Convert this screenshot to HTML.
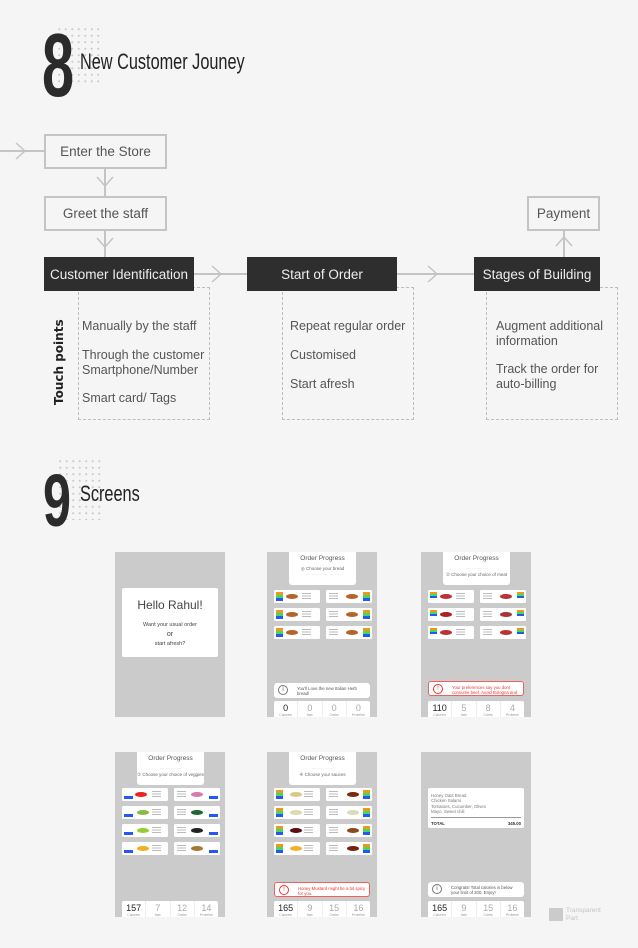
<!DOCTYPE html>
<html><head><meta charset="utf-8"><style>
*{margin:0;padding:0;box-sizing:border-box}
body{width:638px;height:948px;background:#f5f5f5;position:relative;overflow:hidden;font-family:"Liberation Sans",sans-serif;color:#555}
.a{position:absolute}
.dots{position:absolute;background-image:radial-gradient(circle,#c8c8c8 0.8px,transparent 1.2px);background-size:6.5px 6.5px}
.num{position:absolute;font-family:"Liberation Sans Narrow","Liberation Sans",sans-serif;color:#2b2b2b;font-weight:bold;transform-origin:left top}
.ttl{position:absolute;font-family:"Liberation Sans Narrow","Liberation Sans",sans-serif;color:#222;transform-origin:left top}
.box{position:absolute;border:2px solid #c4c4c4;background:#f5f5f5;font-size:13.5px;color:#555;display:flex;align-items:center;justify-content:center;font-family:"Liberation Sans",sans-serif;z-index:2}
.dk{position:absolute;background:#2e2e2e;color:#eee;font-size:13.5px;display:flex;align-items:center;justify-content:center;font-family:"Liberation Sans",sans-serif;z-index:2}
.dash{position:absolute;border:1.5px dashed #bdbdbd}
.tp{position:absolute;font-family:"Liberation Sans",sans-serif;font-size:12.5px;color:#555;line-height:15px}
.ln{position:absolute;background:#c4c4c4}
.ph{position:absolute;width:110px;height:165px;background:#cbcbcb;overflow:hidden}
.ph .w{position:absolute;background:#fff;border-radius:2px}
.op{left:22px;top:0;width:67px;height:33px;border-radius:0 0 3px 3px!important;text-align:center;font-size:4.5px;color:#666;padding-top:3px;line-height:6px;white-space:nowrap}
.op b{display:block;font-weight:normal;font-size:6.5px;color:#555;margin-bottom:3px;line-height:8px}
.c{position:absolute;width:46px;height:13px;background:#fff;border-radius:1.5px}
.bars{position:absolute;top:2px;width:7px;height:9px;background:linear-gradient(#f7941d 0 33%,#3ddc5f 33% 66%,#2457f5 66%)}
.fd{position:absolute;top:4px;width:12px;height:5px;border-radius:50%;background:#b5652b}
.tx{position:absolute;top:3px;width:9px;height:7px;background:repeating-linear-gradient(#bbb 0 1px,transparent 1px 2.5px)}
.st{position:absolute;left:7px;top:149px;width:96px;height:16px;background:#fff;display:flex;border-radius:2px 2px 0 0}
.st div{flex:1;text-align:center;font-size:9px;color:#aaa;line-height:10px;padding-top:2px;border-left:1px solid #eee}
.st div:first-child{color:#222;border:0}
.st div span{display:block;font-size:3.5px;color:#999;line-height:4px}
.tip{position:absolute;left:7px;top:130px;width:96px;height:15px;background:#fff;border-radius:3px;font-size:4.3px;color:#555;padding:3px 2px 0 23px;line-height:5.3px;overflow:hidden}
.tip i{position:absolute;left:4px;top:2px;width:10px;height:10px;border:1px solid #777;border-radius:50%;font-style:normal;font-size:6px;text-align:center;line-height:9px}
.tip.r{border:1px solid #f06060;color:#e33}
.tip.r i{border-color:#e33;color:#e33}
</style></head><body>

<div class="dots" style="left:56px;top:26px;width:46px;height:60px"></div>
<div class="num" style="left:42px;top:21px;font-size:90px;transform:scaleX(0.64);line-height:90px">8</div>
<div class="ttl" style="left:80px;top:49px;font-size:22px;transform:scaleX(0.74)">New Customer Jouney</div>

<div class="ln" style="left:0;top:150px;width:44px;height:2px"></div>
<svg class="a" style="left:14px;top:142px" width="14" height="18"><polyline points="2,1 11,9 2,17" fill="none" stroke="#c4c4c4" stroke-width="1.5"/></svg>
<div class="box" style="left:44px;top:134px;width:123px;height:35px">Enter the Store</div>
<div class="ln" style="left:104px;top:169px;width:2px;height:27px"></div>
<svg class="a" style="left:96px;top:175px" width="18" height="14"><polyline points="1,2 9,11 17,2" fill="none" stroke="#c4c4c4" stroke-width="1.5"/></svg>
<div class="box" style="left:44px;top:196px;width:123px;height:35px">Greet the staff</div>
<div class="ln" style="left:104px;top:231px;width:2px;height:26px"></div>
<svg class="a" style="left:96px;top:236px" width="18" height="14"><polyline points="1,2 9,11 17,2" fill="none" stroke="#c4c4c4" stroke-width="1.5"/></svg>

<div class="dk" style="left:44px;top:257px;width:150px;height:34px">Customer Identification</div>
<div class="ln" style="left:194px;top:273px;width:53px;height:2px"></div>
<svg class="a" style="left:210px;top:265px" width="14" height="18"><polyline points="2,1 11,9 2,17" fill="none" stroke="#c4c4c4" stroke-width="1.5"/></svg>
<div class="dk" style="left:247px;top:257px;width:150px;height:34px">Start of Order</div>
<div class="ln" style="left:397px;top:273px;width:77px;height:2px"></div>
<svg class="a" style="left:426px;top:265px" width="14" height="18"><polyline points="2,1 11,9 2,17" fill="none" stroke="#c4c4c4" stroke-width="1.5"/></svg>
<div class="dk" style="left:474px;top:257px;width:126px;height:34px">Stages of Building</div>
<div class="ln" style="left:563px;top:231px;width:2px;height:26px"></div>
<svg class="a" style="left:555px;top:234px" width="18" height="14"><polyline points="1,12 9,3 17,12" fill="none" stroke="#c4c4c4" stroke-width="1.5"/></svg>
<div class="box" style="left:527px;top:196px;width:73px;height:35px">Payment</div>

<div class="dash" style="left:78px;top:287px;width:132px;height:133px"></div>
<div class="dash" style="left:282px;top:287px;width:132px;height:133px"></div>
<div class="dash" style="left:486px;top:287px;width:132px;height:133px"></div>

<div class="a" style="left:52px;top:405px;transform:rotate(-90deg);transform-origin:left top;font-family:'DejaVu Sans',sans-serif;font-weight:bold;font-size:12px;color:#222;white-space:nowrap">Touch points</div>
<div class="tp" style="left:82px;top:319px">Manually by the staff</div>
<div class="tp" style="left:82px;top:348px">Through the customer<br>Smartphone/Number</div>
<div class="tp" style="left:82px;top:391px">Smart card/ Tags</div>
<div class="tp" style="left:290px;top:319px">Repeat regular order</div>
<div class="tp" style="left:290px;top:348px">Customised</div>
<div class="tp" style="left:290px;top:377px">Start afresh</div>
<div class="tp" style="left:496px;top:319px">Augment additional<br>information</div>
<div class="tp" style="left:496px;top:362px">Track the order for<br>auto-billing</div>

<div class="dots" style="left:57px;top:458px;width:46px;height:62px"></div>
<div class="num" style="left:43px;top:464px;font-size:74px;transform:scaleX(0.68);line-height:74px">9</div>
<div class="ttl" style="left:80px;top:481px;font-size:22px;transform:scaleX(0.74)">Screens</div>

<div class="ph" style="left:115px;top:552px">
 <div class="w" style="left:7px;top:36px;width:96px;height:69px;text-align:center">
  <div style="font-size:12px;color:#444;margin-top:10px">Hello Rahul!</div>
  <div style="font-size:5.5px;color:#444;margin-top:9px;line-height:9px">Want your usual order<br><span style="font-size:7px">or</span><br>start afresh?</div>
 </div>
</div>

<div class="ph" style="left:267px;top:552px">
 <div class="w op"><b>Order Progress</b>◎ Choose your bread<br><span style="color:#ddd">— — — — — —</span></div>
 <div class="c" style="left:7px;top:38px"><div class="bars" style="left:2px"></div><div class="fd" style="left:12px"></div><div class="tx" style="left:28px"></div></div>
 <div class="c" style="left:59px;top:38px"><div class="tx" style="left:3px"></div><div class="fd" style="left:20px"></div><div class="bars" style="right:2px"></div></div>
 <div class="c" style="left:7px;top:56px"><div class="bars" style="left:2px"></div><div class="fd" style="left:12px"></div><div class="tx" style="left:28px"></div></div>
 <div class="c" style="left:59px;top:56px"><div class="tx" style="left:3px"></div><div class="fd" style="left:20px"></div><div class="bars" style="right:2px"></div></div>
 <div class="c" style="left:7px;top:74px"><div class="bars" style="left:2px"></div><div class="fd" style="left:12px"></div><div class="tx" style="left:28px"></div></div>
 <div class="c" style="left:59px;top:74px"><div class="tx" style="left:3px"></div><div class="fd" style="left:20px"></div><div class="bars" style="right:2px"></div></div>
 <div class="tip" style="top:131px"><i>i</i>You'll Love the new Italian Herb bread!</div>
 <div class="st"><div>0<span>Calories</span></div><div>0<span>fats</span></div><div>0<span>Carbs</span></div><div>0<span>Proteins</span></div></div>
</div>

<div class="ph" style="left:421px;top:552px">
 <div class="w op"><b>Order Progress</b><span style="color:#ddd">— — — —</span><br>② Choose your choice of meat</div>
 <div class="c" style="left:7px;top:38px"><div class="bars" style="left:2px;height:6px"></div><div class="fd" style="left:12px;background:#b33"></div><div class="tx" style="left:28px"></div></div>
 <div class="c" style="left:59px;top:38px"><div class="tx" style="left:3px"></div><div class="fd" style="left:20px;background:#b33"></div><div class="bars" style="right:2px;height:6px"></div></div>
 <div class="c" style="left:7px;top:56px"><div class="bars" style="left:2px;height:6px"></div><div class="fd" style="left:12px;background:#a22"></div><div class="tx" style="left:28px"></div></div>
 <div class="c" style="left:59px;top:56px"><div class="tx" style="left:3px"></div><div class="fd" style="left:20px;background:#a33"></div><div class="bars" style="right:2px;height:6px"></div></div>
 <div class="c" style="left:7px;top:74px"><div class="bars" style="left:2px;height:6px"></div><div class="fd" style="left:12px;background:#b33"></div><div class="tx" style="left:28px"></div></div>
 <div class="c" style="left:59px;top:74px"><div class="tx" style="left:3px"></div><div class="fd" style="left:20px;background:#b33"></div><div class="bars" style="right:2px;height:6px"></div></div>
 <div class="tip r" style="top:129px"><i>!</i>Your preferences say you dont consume beef. Avoid Bologna and Pastrami</div>
 <div class="st"><div>110<span>Calories</span></div><div>5<span>fats</span></div><div>8<span>Carbs</span></div><div>4<span>Proteins</span></div></div>
</div>

<div class="ph" style="left:115px;top:752px">
 <div class="w op"><b>Order Progress</b><span style="color:#ddd">— — — —</span><br>② Choose your choice of veggies</div>
 <div class="c" style="left:7px;top:36px"><div class="bars" style="left:2px;top:8px;width:9px;height:3px;background:#2457f5"></div><div class="fd" style="left:13px;background:#e22"></div><div class="tx" style="left:30px"></div></div>
 <div class="c" style="left:59px;top:36px"><div class="tx" style="left:3px"></div><div class="fd" style="left:17px;background:#d7a"></div><div class="bars" style="right:2px;top:8px;width:9px;height:3px;background:#2457f5"></div></div>
 <div class="c" style="left:7px;top:54px"><div class="bars" style="left:2px;top:8px;width:9px;height:3px;background:#2457f5"></div><div class="fd" style="left:15px;background:#8b4"></div><div class="tx" style="left:30px"></div></div>
 <div class="c" style="left:59px;top:54px"><div class="tx" style="left:3px"></div><div class="fd" style="left:17px;background:#263"></div><div class="bars" style="right:2px;top:8px;width:9px;height:3px;background:#2457f5"></div></div>
 <div class="c" style="left:7px;top:72px"><div class="bars" style="left:2px;top:8px;width:9px;height:3px;background:#2457f5"></div><div class="fd" style="left:15px;background:#9c3"></div><div class="tx" style="left:30px"></div></div>
 <div class="c" style="left:59px;top:72px"><div class="tx" style="left:3px"></div><div class="fd" style="left:17px;background:#222"></div><div class="bars" style="right:2px;top:8px;width:9px;height:3px;background:#2457f5"></div></div>
 <div class="c" style="left:7px;top:90px"><div class="bars" style="left:2px;top:8px;width:9px;height:3px;background:#2457f5"></div><div class="fd" style="left:15px;background:#f0b020"></div><div class="tx" style="left:30px"></div></div>
 <div class="c" style="left:59px;top:90px"><div class="tx" style="left:3px"></div><div class="fd" style="left:17px;background:#a73"></div><div class="bars" style="right:2px;top:8px;width:9px;height:3px;background:#2457f5"></div></div>
 <div class="st"><div>157<span>Calories</span></div><div>7<span>fats</span></div><div>12<span>Carbs</span></div><div>14<span>Proteins</span></div></div>
</div>

<div class="ph" style="left:267px;top:752px">
 <div class="w op"><b>Order Progress</b><span style="color:#ddd">— — — —</span><br>④ Choose your sauces</div>
 <div class="c" style="left:7px;top:36px"><div class="bars" style="left:2px"></div><div class="fd" style="left:16px;background:#dcc98a"></div><div class="tx" style="left:30px"></div></div>
 <div class="c" style="left:59px;top:36px"><div class="tx" style="left:3px"></div><div class="fd" style="left:21px;background:#7a2b10"></div><div class="bars" style="right:2px"></div></div>
 <div class="c" style="left:7px;top:54px"><div class="bars" style="left:2px"></div><div class="fd" style="left:16px;background:#ddd8b0"></div><div class="tx" style="left:30px"></div></div>
 <div class="c" style="left:59px;top:54px"><div class="tx" style="left:3px"></div><div class="fd" style="left:21px;background:#ddd8b8"></div><div class="bars" style="right:2px"></div></div>
 <div class="c" style="left:7px;top:72px"><div class="bars" style="left:2px"></div><div class="fd" style="left:16px;background:#5a1010"></div><div class="tx" style="left:30px"></div></div>
 <div class="c" style="left:59px;top:72px"><div class="tx" style="left:3px"></div><div class="fd" style="left:21px;background:#8a4a20"></div><div class="bars" style="right:2px"></div></div>
 <div class="c" style="left:7px;top:90px"><div class="bars" style="left:2px"></div><div class="fd" style="left:16px;background:#f0b030"></div><div class="tx" style="left:30px"></div></div>
 <div class="c" style="left:59px;top:90px"><div class="tx" style="left:3px"></div><div class="fd" style="left:21px;background:#7a2010"></div><div class="bars" style="right:2px"></div></div>
 <div class="tip r"><i>!</i>Honey Mustard might be a bit spicy for you.</div>
 <div class="st"><div>165<span>Calories</span></div><div>9<span>fats</span></div><div>15<span>Carbs</span></div><div>16<span>Proteins</span></div></div>
</div>

<div class="ph" style="left:421px;top:752px">
 <div class="w" style="left:7px;top:36px;width:96px;height:40px;font-size:4.3px;color:#777;padding:5px 3px 0 3px;line-height:5.3px">
  Honey Oats Bread<br>Chicken Salami<br>Tomatoes, Cucumber, Olives<br>Mayo, Sweet chili
  <div style="border-top:1px solid #999;margin-top:3px;padding-top:3px;display:flex;justify-content:space-between;color:#333;font-weight:bold"><span>TOTAL</span><span>345.00</span></div>
 </div>
 <div class="tip"><i>i</i>Congrats! Total calories is below your limit of 200. Enjoy!</div>
 <div class="st"><div>165<span>Calories</span></div><div>9<span>fats</span></div><div>15<span>Carbs</span></div><div>16<span>Proteins</span></div></div>
</div>

<div class="a" style="left:549px;top:908px;width:14px;height:13px;background:#cbcbcb"></div>
<div class="a" style="left:566px;top:907px;font-size:6.5px;color:#c4c4c4;line-height:7.5px">Transparent<br>Part</div>
</body></html>
